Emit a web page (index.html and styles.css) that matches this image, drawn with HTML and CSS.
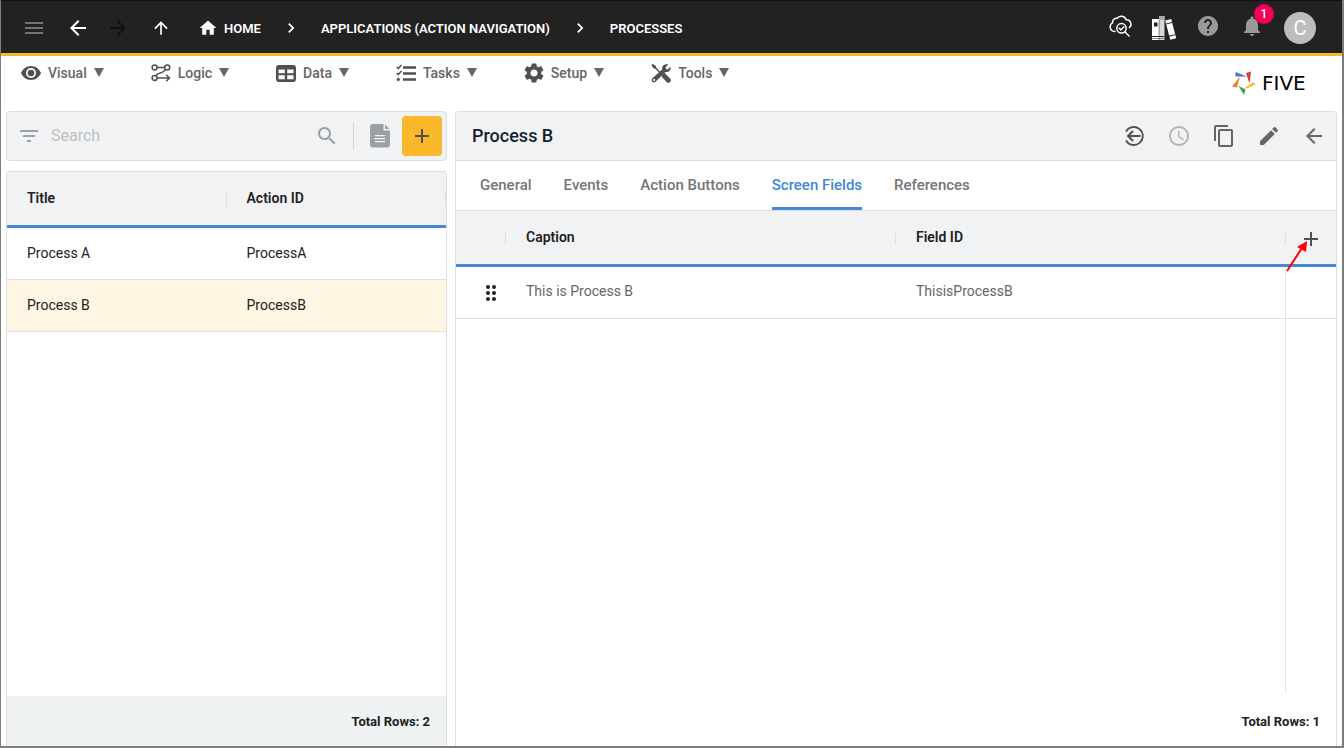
FILE: index.html
```html
<!DOCTYPE html>
<html lang="en">
<head>
<meta charset="utf-8">
<meta name="viewport" content="width=device-width, initial-scale=1">
<title>Five - Processes</title>
<link rel="stylesheet" href="styles.css">
</head>
<body>
<div class="app">
  <header class="topbar">
    <div class="topbar-nav">
      <button class="icon-btn muted" aria-label="Menu"><svg width="24" height="24" viewBox="0 0 24 24"><path d="M3 18h18v-2H3v2zm0-5h18v-2H3v2zm0-7v2h18V6H3z"/></svg></button>
      <button class="icon-btn" aria-label="Back"><svg width="24" height="24" viewBox="0 0 24 24"><path d="M20 11H7.830l5.590-5.590L12 4l-8 8 8 8 1.410-1.410L7.830 13H20v-2z"/></svg></button>
      <button class="icon-btn off" aria-label="Forward" disabled><svg width="24" height="24" viewBox="0 0 24 24"><path d="M12 4l-1.410 1.410L16.170 11H4v2h12.170l-5.580 5.590L12 20l8-8z"/></svg></button>
      <button class="icon-btn" aria-label="Up"><svg width="20" height="20" viewBox="0 0 24 24"><path d="M4 12l1.410 1.410L11 7.830V20h2V7.830l5.580 5.590L20 12l-8-8-8 8z"/></svg></button>
    </div>
    <nav class="crumbs" aria-label="Breadcrumb">
      <a class="home" href="#"><svg width="20" height="20" viewBox="0 0 24 24"><path d="M10 20v-6h4v6h5v-8h3L12 3 2 12h3v8z"/></svg>HOME</a>
      <svg width="20" height="20" viewBox="0 0 24 24"><path d="M10 6L8.590 7.410 13.170 12l-4.580 4.590L10 18l6-6z"/></svg>
      <a href="#">APPLICATIONS (ACTION NAVIGATION)</a>
      <svg width="20" height="20" viewBox="0 0 24 24"><path d="M10 6L8.590 7.410 13.170 12l-4.580 4.590L10 18l6-6z"/></svg>
      <a href="#">PROCESSES</a>
    </nav>
    <div class="topbar-tools">
      <button class="tool raised" aria-label="Inspect cloud"><svg width="24" height="24" viewBox="0 0 24 24" fill="none" stroke="currentColor" stroke-width="1.500" stroke-linecap="round"><path d="M7 17.500H6.500a4.600 4.600 0 0 1-2-8.600 4 4 0 0 1 4.500-4.500 5.200 5.200 0 0 1 9.200 1.400 4.400 4.400 0 0 1 3.200 7.700"/><circle cx="13.500" cy="14.300" r="4.700"/><path d="M17 18l4 4"/><path d="M11.300 14.300l1.600 1.600 3-3.200"/></svg></button>
      <button class="tool" aria-label="Library"><svg width="26" height="26" viewBox="0 0 26 26"><path d="M1 4h7v21H1z"/><path fill="#d8d8d8" d="M8 1h5.500v24H8z"/><path fill="#aaa" d="M8 1h5.500v4H8z"/><path d="M14.200 5.500l6-1.500 5 19.300-6 1.500z"/><path fill="#222" d="M3 7.500h3.500v4H3zM1 21h12.500v.9H1zM1 23h12.500v.6H1zM7.800 5h.5v20h-.5zM14.600 8.700l6.200-1.600.2.900-6.200 1.600zM17.800 20.800l6.200-1.600.2.900-6.200 1.600z"/></svg></button>
      <button class="tool raised gray" aria-label="Help"><svg width="24" height="24" viewBox="0 0 24 24"><path d="M12 2C6.480 2 2 6.480 2 12s4.480 10 10 10 10-4.480 10-10S17.520 2 12 2zm1 17h-2v-2h2v2zm2.070-7.750l-.9.920C13.450 12.900 13 13.500 13 15h-2v-.5c0-1.100.450-2.100 1.170-2.830l1.240-1.260c.370-.360.590-.860.590-1.410 0-1.100-.9-2-2-2s-2 .9-2 2H8c0-2.210 1.790-4 4-4s4 1.790 4 4c0 .880-.360 1.680-.930 2.250z"/></svg></button>
      <button class="tool raised gray" aria-label="Notifications"><svg width="24" height="24" viewBox="0 0 24 24"><path d="M12 22c1.100 0 2-.9 2-2h-4c0 1.100.890 2 2 2zm6-6v-5c0-3.070-1.640-5.640-4.500-6.320V4c0-.830-.670-1.500-1.500-1.500s-1.500.670-1.500 1.500v.680C7.630 5.360 6 7.920 6 11v5l-2 2v1h16v-1l-2-2z"/></svg><span class="badge">1</span></button>
      <button class="avatar" aria-label="Account">C</button>
    </div>
  </header>

  <div class="menubar">
    <nav class="menus" aria-label="Main">
      <button class="menu"><svg width="20" height="20" viewBox="0 0 20 20"><path fill-rule="evenodd" d="M10 3C5.500 3 1.700 5.800 0 10c1.700 4.200 5.500 7 10 7s8.300-2.800 10-7c-1.700-4.200-5.500-7-10-7zm0 12a5 5 0 1 1 0-10 5 5 0 0 1 0 10z"/><circle cx="10" cy="10" r="3.300"/></svg>Visual<i class="caret"></i></button>
      <button class="menu"><svg width="20" height="20" viewBox="0 0 20 20" fill="none" stroke="currentColor" stroke-width="1.500"><circle cx="3.600" cy="4.500" r="2.500"/><circle cx="16.200" cy="4.500" r="2.500"/><circle cx="3.600" cy="15" r="2.500"/><path d="M6.100 4.500h7.600M14.600 6.300C12.500 11 7 9 4.800 12.800M6.100 15H18M15.200 11.800l3.300 3.200-3.300 3.200"/></svg>Logic<i class="caret"></i></button>
      <button class="menu"><svg width="20" height="20" viewBox="0 0 20 20"><path fill-rule="evenodd" d="M3 2h14a3 3 0 0 1 3 3v11a3 3 0 0 1-3 3H3a3 3 0 0 1-3-3V5a3 3 0 0 1 3-3zM2.500 6.500v3.700h6.300V6.500zm8.700 0v3.700h6.300V6.500zM2.500 12.300v4h6.300v-4zm8.700 0v4h6.300v-4z"/></svg>Data<i class="caret"></i></button>
      <button class="menu"><svg width="20" height="20" viewBox="0 0 20 20" fill="none" stroke="currentColor"><path stroke-width="2.300" d="M7 4.500h13M7 10.500h13M7 16.500h13"/><path stroke-width="1.500" d="M.8 4l1.500 1.600L5.500 2M.8 10l1.500 1.600L5.500 8"/><circle cx="2.300" cy="16.500" r="1.200" fill="currentColor"/></svg>Tasks<i class="caret"></i></button>
      <button class="menu"><svg width="20" height="20" viewBox="2 2 20 20"><path d="M19.140 12.940c.040-.300.060-.610.060-.940 0-.320-.020-.640-.070-.940l2.030-1.580c.180-.140.230-.410.120-.610l-1.920-3.320c-.120-.220-.370-.290-.590-.220l-2.390.960c-.500-.380-1.030-.700-1.620-.940l-.360-2.540c-.040-.240-.240-.410-.480-.410h-3.840c-.240 0-.430.170-.470.410l-.360 2.540c-.590.240-1.130.570-1.620.940l-2.390-.960c-.220-.080-.470 0-.590.220L2.740 8.870c-.120.210-.080.470.120.610l2.030 1.580c-.050.300-.090.630-.090.940s.020.640.070.940l-2.030 1.580c-.180.140-.230.410-.120.610l1.920 3.320c.120.220.370.290.590.220l2.390-.960c.500.380 1.030.700 1.620.940l.360 2.540c.050.240.240.410.480.410h3.840c.240 0 .440-.170.470-.410l.360-2.540c.590-.240 1.130-.560 1.620-.940l2.390.960c.220.080.470 0 .590-.220l1.920-3.320c.120-.220.070-.470-.120-.610l-2.010-1.580zM12 15.600c-1.980 0-3.600-1.620-3.600-3.600s1.620-3.600 3.600-3.600 3.600 1.620 3.600 3.600-1.620 3.600-3.600 3.600z"/></svg>Setup<i class="caret"></i></button>
      <button class="menu"><svg width="20" height="20" viewBox="0 0 20 20"><path d="M1.500 1L4.500 2.500 5.500 5 9 8.500 8 9.500 4.500 6 2.200 5 .5 2z"/><path d="M11.200 11.500l2.200-1.700 5.700 5.700a2.400 2.400 0 0 1-3.400 3.400l-4.900-4.900z"/><path d="M17.300 1.500l-2.700 2.800.5 1.600 1.600.5 2.800-2.700c1 3.300-1.700 6.200-5 5.200L4.800 18.600a2.300 2.300 0 0 1-3.400-3.300L11.100 6.400C10.300 3.200 13.500.4 17.300 1.500zM3 16a1 1 0 1 0 .1 0z" fill-rule="evenodd"/></svg>Tools<i class="caret"></i></button>
    </nav>
    <a class="brand" href="#" aria-label="Five"><svg width="24" height="24" viewBox="0 0 24 24"><path fill="#3b7ddd" d="M3.500 1l11.500 4.500L3.500 5.500z"/><path fill="#e53935" d="M19 .5L17.500 12.500 14 2z"/><path fill="#f9b92a" d="M24 13l-8 4-4.500 1 9-6.500z"/><path fill="#34a853" d="M6.500 15l7 3.500-1.500 5.500z"/><path fill="#f57c20" d="M8 5.500L5 16.500l-5-1z"/></svg><span>FIVE</span></a>
  </div>

  <main class="panels">
    <section class="side">
      <div class="search card">
        <button class="flat slate" aria-label="Filter"><svg width="24" height="24" viewBox="0 0 24 24"><path d="M10 18h4v-2h-4v2zM3 6v2h18V6H3zm3 7h12v-2H6v2z"/></svg></button>
        <input type="text" placeholder="Search" aria-label="Search">
        <button class="flat slate" aria-label="Run search"><svg width="24" height="24" viewBox="0 0 24 24"><path d="M15.500 14h-.79l-.28-.27C15.410 12.590 16 11.110 16 9.500 16 5.910 13.090 3 9.500 3S3 5.910 3 9.500 5.910 16 9.500 16c1.610 0 3.090-.59 4.230-1.570l.27.28v.79l5 4.990L20.490 19l-4.990-5zm-6 0C7.010 14 5 11.990 5 9.500S7.010 5 9.500 5 14 7.010 14 9.500 11.990 14 9.500 14z"/></svg></button>
        <span class="rule"></span>
        <button class="flat slate" aria-label="Report"><svg width="20" height="24" viewBox="0 0 20 24"><path d="M3 0h10.500v6.500H20V20.500a3 3 0 0 1-3 3H3a3 3 0 0 1-3-3V3a3 3 0 0 1 3-3z"/><path d="M15 .5L19.500 5H15z"/><path fill="#f1f2f4" d="M5 11h10v1.300H5zM4 14h11v1.300H4zM5 17h10v1.300H5z"/></svg></button>
        <button class="add" aria-label="Add process"><svg width="24" height="24" viewBox="0 0 24 24"><path d="M19 13h-6v6h-2v-6H5v-2h6V5h2v6h6v2z"/></svg></button>
      </div>
      <div class="list card">
        <table class="table">
          <thead><tr><th>Title</th><th>Action ID</th></tr></thead>
          <tbody>
            <tr><td>Process A</td><td>ProcessA</td></tr>
            <tr class="selected"><td>Process B</td><td>ProcessB</td></tr>
          </tbody>
        </table>
        <div class="total tinted">Total Rows: 2</div>
      </div>
    </section>

    <section class="detail card">
      <div class="detail-head">
        <h1>Process B</h1>
        <div class="actions">
          <button class="flat dark" aria-label="Revert"><svg width="24" height="24" viewBox="0 0 24 24" fill="none" stroke="currentColor" stroke-width="1.800"><path d="M4 7.500a9 9 0 1 1 0 9"/><path stroke-width="2" d="M18.500 12H6M11 7l-5 5 5 5"/></svg></button>
          <button class="flat faint" aria-label="History"><svg width="24" height="24" viewBox="0 0 24 24"><path d="M11.990 2C6.470 2 2 6.480 2 12s4.470 10 9.990 10C17.520 22 22 17.520 22 12S17.520 2 11.990 2zM12 20c-4.420 0-8-3.580-8-8s3.580-8 8-8 8 3.580 8 8-3.580 8-8 8zm.500-13H11v6l5.250 3.150.750-1.230-4.500-2.670z"/></svg></button>
          <button class="flat mid" aria-label="Copy"><svg width="24" height="24" viewBox="0 0 24 24"><path d="M16 1H4c-1.100 0-2 .9-2 2v14h2V3h12V1zm3 4H8c-1.100 0-2 .9-2 2v14c0 1.100.9 2 2 2h11c1.100 0 2-.9 2-2V7c0-1.100-.9-2-2-2zm0 16H8V7h11v14z"/></svg></button>
          <button class="flat mid" aria-label="Edit"><svg width="24" height="24" viewBox="0 0 24 24"><path d="M3 17.250V21h3.750L17.810 9.940l-3.750-3.750L3 17.250zM20.710 7.040c.390-.390.390-1.020 0-1.410l-2.340-2.340c-.390-.390-1.020-.390-1.410 0l-1.830 1.830 3.750 3.750 1.830-1.830z"/></svg></button>
          <button class="flat mid" aria-label="Close"><svg width="24" height="24" viewBox="0 0 24 24"><path d="M20 11H7.830l5.590-5.590L12 4l-8 8 8 8 1.410-1.410L7.830 13H20v-2z"/></svg></button>
        </div>
      </div>
      <div class="tabs" role="tablist">
        <button role="tab">General</button>
        <button role="tab">Events</button>
        <button role="tab">Action Buttons</button>
        <button role="tab" class="active" aria-selected="true">Screen Fields</button>
        <button role="tab">References</button>
      </div>
      <div class="fields">
        <table class="table soft">
          <colgroup><col class="narrow"><col><col><col class="narrow"></colgroup>
          <thead><tr><th></th><th>Caption</th><th>Field ID</th><th class="tool-cell"><button class="flat dark" aria-label="Add screen field"><svg width="24" height="24" viewBox="0 0 24 24"><path d="M19 13h-6v6h-2v-6H5v-2h6V5h2v6h6v2z"/></svg></button>
            <svg class="pointer" width="24" height="34" viewBox="0 0 24 34"><path fill="none" stroke="#f00" stroke-width="2" d="M1 32L16 9"/><path fill="#f00" d="M21 2L20 13 11 8z"/></svg></th></tr></thead>
          <tbody>
            <tr><td class="grip-cell"><svg class="grip" width="24" height="24" viewBox="0 0 24 24"><circle cx="9" cy="6" r="2"/><circle cx="15" cy="6" r="2"/><circle cx="9" cy="12" r="2"/><circle cx="15" cy="12" r="2"/><circle cx="9" cy="18" r="2"/><circle cx="15" cy="18" r="2"/></svg></td><td>This is Process B</td><td>ThisisProcessB</td><td></td></tr>
          </tbody>
        </table>
      </div>
      <div class="total">Total Rows: 1</div>
    </section>
  </main>
</div>
</body>
</html>
```

FILE: styles.css
```css
* { box-sizing: border-box; }
body { margin: 0; background: #fff; font-family: Roboto, "Liberation Sans", sans-serif; font-size: 14px; color: #212121; }
button { font: inherit; color: inherit; background: none; border: 0; padding: 0; margin: 0; cursor: pointer; }
a { color: inherit; text-decoration: none; }
svg { display: block; fill: currentColor; flex: none; }
svg[fill="none"] { fill: none; }

.app { display: flex; flex-direction: column; height: 100vh; border: solid #7d7d7d; border-width: 0 2px 2px 1px; }

.topbar { display: flex; align-items: center; height: 56px; padding: 0 26px 0 21px; background: #222; color: #fff; box-shadow: inset 0 -3px #f8b82b, inset 0 1px #111; }
.topbar-nav { display: flex; gap: 16px; }
.icon-btn { display: grid; place-items: center; width: 24px; height: 24px; }
.icon-btn:nth-child(2) { margin: 0 0 0 4px; }
.icon-btn:nth-child(4) { margin-left: 3px; }
.muted { color: #757575; }
.off { color: #111; }
.crumbs { display: flex; align-items: center; gap: 20px; margin-left: 25px; font-size: 13px; font-weight: 600; }
.home { display: flex; align-items: center; gap: 6px; }
.topbar-tools { display: flex; align-items: center; margin-left: auto; }
.tool { position: relative; display: grid; place-items: center; width: 44px; height: 44px; }
.raised { padding-bottom: 4px; }
.gray { color: #999; }
.badge { position: absolute; top: -2px; right: 0; width: 20px; height: 20px; border-radius: 50%; background: #f50057; color: #fff; font-size: 12px; font-weight: 500; line-height: 20px; }
.avatar { width: 32px; height: 32px; margin-left: 10px; border-radius: 50%; background: #bdbdbd; color: #fff; font-size: 20px; line-height: 32px; }

.menubar { display: flex; justify-content: space-between; align-items: flex-start; height: 55px; padding: 6px 23px 0 20px; }
.menus { display: flex; gap: 47px; }
.menu { display: flex; align-items: center; gap: 7px; height: 21px; color: #666; font-size: 14px; font-weight: 500; line-height: 16px; }
.menu svg { color: #505050; }
.caret { border: 5px solid transparent; border-top: 9px solid #666; border-bottom: 0; }
.brand { display: flex; align-items: center; gap: 6px; min-width: 87px; padding-top: 9px; color: #000; font-family: "DejaVu Sans", sans-serif; font-size: 20px; line-height: 24px; }

.panels { display: grid; grid-template-columns: 1fr 2fr; gap: 8px; flex: 1; min-height: 0; padding: 0 5px; }
.card { border: 1px solid #dedede; border-radius: 4px; }
.side { display: flex; flex-direction: column; gap: 10px; min-width: 0; }
.search { display: flex; align-items: center; height: 50px; padding: 0 4px 0 10px; background: #f1f2f4; }
.search input { flex: 1; min-width: 0; border: 0; outline: 0; padding: 0 0 2px; margin-left: 10px; background: none; font: inherit; font-size: 16px; }
.search input::placeholder { color: #bcbfc2; opacity: 1; }
.flat { display: grid; place-items: center; }
.slate { color: #9aa0a6; }
.dark { color: #505050; }
.mid { color: #666; }
.faint { color: #b5b5b5; }
.rule { width: 1px; height: 28px; margin: 0 16px 0 14px; background: #d5d7d9; }
.add { display: grid; place-items: center; width: 40px; height: 40px; margin-left: 12px; border-radius: 4px; background: #f8b82b; color: #505050; }

.list { display: flex; flex-direction: column; flex: 1; min-height: 0; overflow: hidden; border-bottom: 0; border-radius: 4px 4px 0 0; }
.table { width: 100%; table-layout: fixed; border-collapse: separate; border-spacing: 0; }
.table th, .table td { padding: 0 0 2px 20px; text-align: left; }
.table th { position: relative; height: 56px; background: #f1f2f4; border-bottom: 3px solid #4488d9; font-weight: 600; }
.table th::after { content: ""; position: absolute; top: 20px; right: -1px; width: 2px; height: 14px; background: #dedfe1; }
.table td { height: 52px; border-bottom: 1px solid #e0e0e0; font-size: 14px; }
.table .tool-cell, .table .grip-cell { padding: 0; }
.table .tool-cell::after { display: none; }
.tool-cell > .flat { margin: 2px auto 0; }
.selected { background: #fff5e3; }
.soft td { color: #666; padding-bottom: 4px; }
.narrow { width: 50px; }
.grip { margin-left: 23px; color: #222; }
.total { flex: none; height: 50px; margin-top: auto; padding-right: 16px; text-align: right; font-size: 13px; font-weight: 700; line-height: 52px; }
.tinted { background: #eef2f3; }

.detail { display: flex; flex-direction: column; min-width: 0; border-bottom: 0; border-radius: 4px 4px 0 0; }
.detail-head { display: flex; align-items: center; justify-content: space-between; height: 49px; padding: 0 10px 0 16px; background: #f1f2f4; border-bottom: 1px solid #dedede; }
.detail-head h1 { margin: 0; padding-bottom: 2px; font-size: 18px; font-weight: 500; color: #141d2e; }
.actions { display: flex; gap: 21px; }
.tabs { display: flex; gap: 32px; height: 50px; padding: 0 24px; border-bottom: 1px solid #dedede; }
.tabs button { border: solid transparent; border-width: 2px 0 3px; color: #757575; font-size: 15px; font-weight: 500; }
.tabs .active { color: #4488d9; border-bottom-color: #4488d9; }
.fields { position: relative; flex: 1; }
.fields::after { content: ""; position: absolute; top: 56px; right: 50px; bottom: 3px; width: 1px; background: #e4e4e4; }
.pointer { position: absolute; top: 28px; left: 0; z-index: 1; }
```
